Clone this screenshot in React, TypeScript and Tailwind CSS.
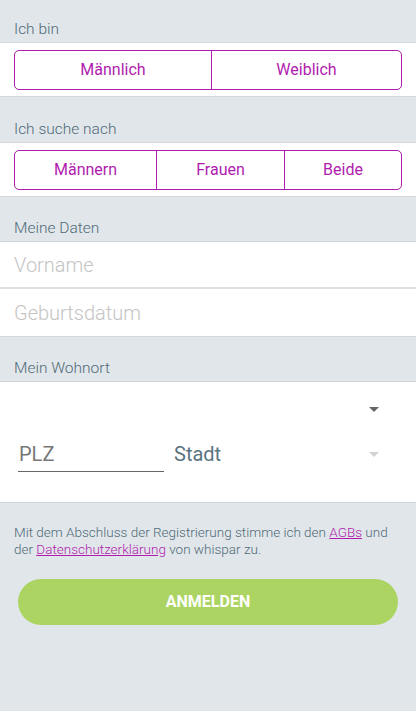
const magenta = "text-[#b01cae]"

const Label = ({ text, height }: { text: string; height: string }) => (
  <div className={`${height} flex items-end px-[14px] pb-[4px] text-[15.5px] leading-[18px] font-light text-[#4f6b78]`}>
    {text}
  </div>
)

const Segmented = ({ options, widths }: { options: string[]; widths: string[] }) => (
  <div className="bg-white border-y border-[#d3d7da] px-[14px] pt-[7px] pb-[6px]">
    <div className="flex h-[40px] rounded-[5px] border border-[#b01cae] overflow-hidden">
      {options.map((o, i) => (
        <div
          key={o}
          className={`${widths[i]} flex items-center justify-center text-[16px] ${magenta} ${i > 0 ? "border-l border-[#b01cae]" : ""}`}
        >
          {o}
        </div>
      ))}
    </div>
  </div>
)

const Arrow = ({ faded }: { faded?: boolean }) => (
  <svg width="10" height="5" viewBox="0 0 10 5">
    <path d="M0 0 L10 0 L5 5 Z" fill={faded ? "#d2d2d2" : "#666666"} />
  </svg>
)

export default function App() {
  return (
    <div className="min-h-[711px] bg-[#e1e6ea] font-['Roboto',sans-serif]">
      <Label text="Ich bin" height="h-[42px]" />
      <Segmented options={["Männlich", "Weiblich"]} widths={["w-[196px]", "flex-1"]} />

      <Label text="Ich suche nach" height="h-[45px]" />
      <Segmented options={["Männern", "Frauen", "Beide"]} widths={["w-[141px]", "w-[128px]", "flex-1"]} />

      <Label text="Meine Daten" height="h-[44px]" />
      <div className="bg-white border-y border-[#d3d7da]">
        <div className="h-[47px] flex items-center px-[14px] text-[20px] font-light text-[#c4c4c4] border-b-2 border-[#e0e0e0]">
          Vorname
        </div>
        <div className="h-[47px] flex items-center px-[14px] text-[20px] font-light text-[#c4c4c4]">
          Geburtsdatum
        </div>
      </div>

      <Label text="Mein Wohnort" height="h-[44px]" />
      <div className="bg-white border-y border-[#d3d7da] pt-[25px] pb-[30px]">
        <div className="flex justify-end pr-[37px] h-[5px]">
          <Arrow />
        </div>
        <div className="mt-[24px] flex items-end pl-[18px] pr-[37px]">
          <div className="w-[146px] h-[36px] flex items-center pl-[1px] text-[20px] text-[#777777] border-b border-[#666666]">
            PLZ
          </div>
          <div className="flex-1 h-[36px] flex items-center justify-between pl-[10px]">
            <span className="text-[20px] text-[#5b7480]">Stadt</span>
            <Arrow faded />
          </div>
        </div>
      </div>

      <p className="mt-[21px] px-[14px] text-[13.5px] leading-[17px] font-light text-[#4f6b78]">
        <span>Mit dem Abschluss der Registrierung stimme ich den </span>
        <a className={`${magenta} underline`}>AGBs</a>
        <span> und</span>{" "}
        <span>der </span>
        <a className={`${magenta} underline`}>Datenschutzerklärung</a>
        <span> von whispar zu.</span>
      </p>

      <div className="px-[18px] mt-[21px]">
        <button className="w-full h-[46px] rounded-full bg-[#acd462] text-white font-bold text-[16px]">
          ANMELDEN
        </button>
      </div>
    </div>
  )
}
